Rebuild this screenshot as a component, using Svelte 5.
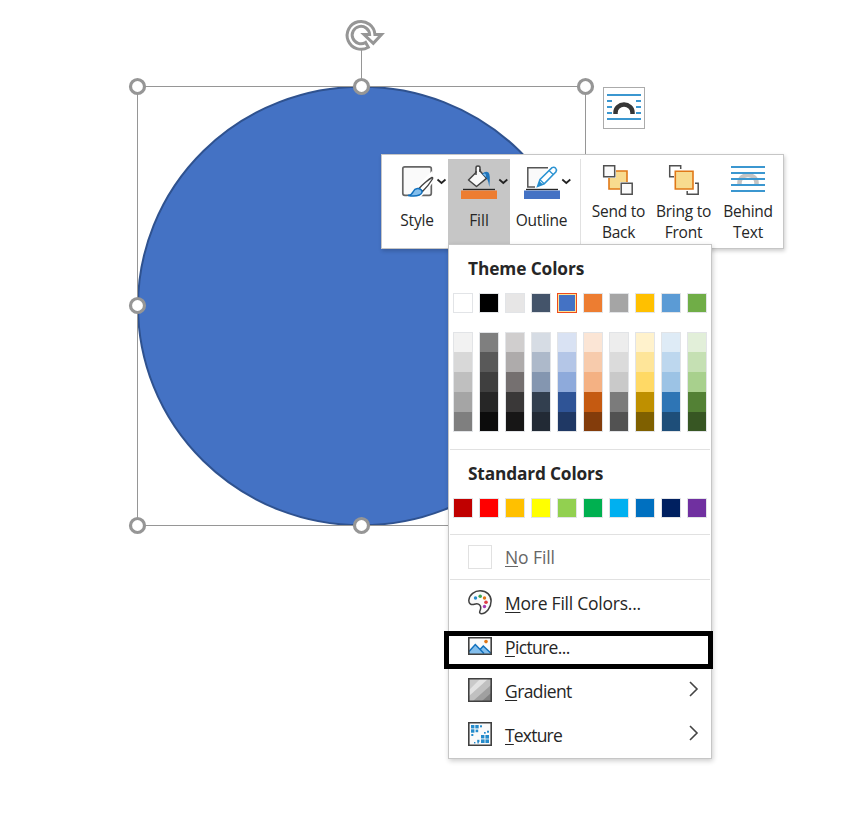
<script>
  const theme = [
    ['#ffffff', ['#f2f2f2', '#d8d8d8', '#bfbfbf', '#a5a5a5', '#7f7f7f']],
    ['#000000', ['#7f7f7f', '#595959', '#3f3f3f', '#262626', '#0c0c0c']],
    ['#e7e6e6', ['#d0cece', '#aeabab', '#757070', '#3a3838', '#171616']],
    ['#44546a', ['#d6dce4', '#adb9ca', '#8496b0', '#323f4f', '#222a35']],
    ['#4472c4', ['#d9e2f3', '#b4c6e7', '#8eaadb', '#2f5496', '#1f3864']],
    ['#ed7d31', ['#fbe5d5', '#f7cbac', '#f4b183', '#c55a11', '#833c0b']],
    ['#a5a5a5', ['#ededed', '#dbdbdb', '#c9c9c9', '#7b7b7b', '#525252']],
    ['#ffc000', ['#fff2cc', '#fee599', '#ffd965', '#bf9000', '#7f6000']],
    ['#5b9bd5', ['#deebf6', '#bdd7ee', '#9cc3e5', '#2e75b5', '#1e4e79']],
    ['#70ad47', ['#e2efd9', '#c5e0b3', '#a8d08d', '#538135', '#375623']]
  ];
  const standard = ['#c00000', '#ff0000', '#ffc000', '#ffff00', '#92d050', '#00b050', '#00b0f0', '#0070c0', '#002060', '#7030a0'];
  const handles = [[137.5, 86.5], [361.5, 86.5], [585.5, 86.5], [137.5, 305.5], [137.5, 525.5], [361.5, 525.5]];
  const dots = [
    [3, 3, 3.4], [7.3, 3, 3.4], [12, 3.3, 2], [3, 7.3, 3.4], [7.6, 7.6, 2.6], [3.3, 12, 2],
    [16, 10, 1.7], [13, 13, 3.4], [17.4, 13, 3.6], [9.2, 17.8, 2.2], [6, 20, 1.4], [13, 17.4, 3.6], [17.4, 17.4, 3.6], [9.4, 20, 1.4], [19, 8.7, 2]
  ];
</script>

<main>
  <svg class="shape" width="854" height="600" viewBox="0 0 854 600">
    <ellipse cx="361.5" cy="306" rx="223.5" ry="219.3" fill="#4472c4" stroke="#2f528f" stroke-width="2" />
    <path d="M137.5 86.5H585.5V525.5H137.5ZM361.5 48V80" fill="none" stroke="#969696" />
    {#each handles as [x, y]}
      <circle cx={x} cy={y} r="7" fill="#fff" stroke="#969696" stroke-width="3.2" />
    {/each}
    <path d="M368.3 47.2A13.9 13.9 0 1 1 374.9 34.5H381.5L373.3 43.3 364 34.5H369.6A8.7 8.7 0 1 0 365.6 42.4Z" fill="#fff" stroke="#969696" stroke-width="3" />
  </svg>

  <button class="layout" aria-label="Layout Options">
    <svg width="36" height="28" viewBox="0 0 36 28">
      <path d="M1 2H35M1 8H6M30 8H35M1 14H6M30 14H35M1 20H6M30 20H35M1 26H35" stroke="#3b97d0" stroke-width="2" />
      <path d="M9.5 21V19.5A8.5 8 0 0 1 26.5 19.5V21" fill="none" stroke="#363636" stroke-width="4.5" />
    </svg>
  </button>

  <div class="toolbar">
    <div class="tool style">
      <svg width="46" height="38" viewBox="0 0 46 38">
        <rect x="1.8" y="3.8" width="28.5" height="28.5" rx="2" fill="#fafafa" stroke="#666" stroke-width="1.7" />
        <path d="M6 34L31 8L34 17L30 22L20 34Z" fill="#fff" />
        <path d="M31 14.5C28 16 21 22 18 25.5L21.5 28.5C25 25 30 18.5 31.5 16Q32 14.4 31 14.5Z" fill="#fff" stroke="#444" stroke-width="1.4" />
        <path d="M7 32.5Q11 31.7 12.3 28.5C14 25 18.5 24.5 20.7 27.4C22.5 31 17 34.5 7 32.5Z" fill="#83beec" stroke="#1170bd" stroke-width="1.5" />
        <path class="chev" d="M36.5 16.5L40.5 20L44.5 16.5" />
      </svg>
      <span>Style</span>
    </div>
    <div class="tool fill">
      <svg width="50" height="38" viewBox="0 0 50 38">
        <path d="M7.5 17L15 9.5V4.7Q15 3 17 3T19 4.7V8L25.5 15.3L15.5 23.5Z" fill="#fafafa" stroke="#444" stroke-width="1.5" stroke-linejoin="round" />
        <path d="M15 8V12M19 6V9" stroke="#444" stroke-width="1.4" />
        <path d="M21 11Q24.5 7.5 27.5 9.5Q29.7 11.5 28.3 24Q27.5 18 25.7 15Z" fill="#1f75bc" />
        <path d="M22 11.2Q24.2 9.5 25 12.2L25 14Z" fill="#83beec" />
        <path d="M2 26.5H34" stroke="#262626" stroke-width="1.4" />
        <path d="M0 27.5H36V36H0Z" fill="#ed7d31" />
        <path class="chev" d="M38.3 16.5L42.3 20L46.3 16.5" />
      </svg>
      <span>Fill</span>
    </div>
    <div class="tool outline">
      <svg width="50" height="38" viewBox="0 0 50 38">
        <path d="M24 4.7H3.8V24H11" fill="#fafafa" stroke="#555" stroke-width="1.5" />
        <path d="M13.5 23.5L16 16.5L28 4.7Q30 3.6 31.5 5T32 8.7L20.2 20.8Z" fill="#fff" stroke="#2b93d2" stroke-width="1.5" />
        <path d="M25 7.5L29.2 11.5M16 16.7L20.2 20.8" stroke="#2b93d2" stroke-width="1.2" />
        <path d="M13.5 23.5L15.3 18L19 21.5Z" fill="#258bcb" />
        <path d="M2 26.5H34" stroke="#262626" stroke-width="1.4" />
        <path d="M0 27.5H36V36H0Z" fill="#4472c4" />
        <path class="chev" d="M38.3 16.5L42.3 20L46.3 16.5" />
      </svg>
      <span>Outline</span>
    </div>
    <div class="tool order send">
      <svg width="32" height="32" viewBox="0 0 32 32">
        <path d="M7 7H25V25H7Z" fill="#f8db8f" stroke="#e07817" stroke-width="1.6" />
        <path d="M0 0H14V14H0ZM18 18H32V32H18Z" fill="#fff" />
        <path d="M1.7 1.7H12.7V12.7H1.7ZM19.2 19.2H30.2V30.2H19.2Z" fill="#fafafa" stroke="#505050" stroke-width="1.5" />
      </svg>
      <span>Send to<br />Back</span>
    </div>
    <div class="tool order bring">
      <svg width="32" height="32" viewBox="0 0 32 32">
        <path d="M12.7 5V1.7H1.7V12.7H6M27 19.2H30.2V30.2H19.2V27" fill="none" stroke="#505050" stroke-width="1.5" />
        <path d="M7.3 7.3H25V25H7.3Z" fill="#f8db8f" stroke="#e07817" stroke-width="1.6" />
      </svg>
      <span>Bring to<br />Front</span>
    </div>
    <div class="tool order behind">
      <svg width="36" height="32" viewBox="0 0 36 32">
        <path d="M9.5 21V18.5A8.5 7.5 0 0 1 26.5 18.5V21" fill="none" stroke="#c4c4c4" stroke-width="4.5" />
        <path d="M1 3H35M1 9H35M1 15H35M1 21H35M1 27H35" stroke="#3b97d0" stroke-width="2" />
      </svg>
      <span>Behind<br />Text</span>
    </div>
  </div>

  <div class="menu">
    <h2>Theme Colors</h2>
    <div class="swatches">
      {#each theme as [base], i}
        <i class="swatch" class:selected={i === 4} style:background={base}></i>
      {/each}
    </div>
    <div class="swatches shades">
      {#each theme as [, shades]}
        <div class="column">
          {#each shades as shade}<i style:background={shade}></i>{/each}
        </div>
      {/each}
    </div>
    <hr />
    <h2 class="std">Standard Colors</h2>
    <div class="swatches">
      {#each standard as color}<i class="swatch" style:background={color}></i>{/each}
    </div>
    <hr class="second" />
    <div class="item none"><i class="empty"></i><span><u>N</u>o Fill</span></div>
    <hr />
    <div class="item">
      <svg width="24" height="26" viewBox="0 0 24 26">
        <path d="M.9 10.8C1.5 5.5 6.5 1.8 12.2 1.8C18.5 1.8 23.1 6 23.1 12C23.1 18.5 18.5 24.7 13.2 24.7C11.7 24.7 11.3 23.4 12 21.8C13 19.6 13 17.5 11.7 16C10.3 14.3 8.3 14.4 6.3 15.2C3.2 16.4.3 14.5.9 10.8Z" fill="#fafafa" stroke="#404040" stroke-width="1.5" />
        <circle cx="7.5" cy="9" r="1.7" fill="#258bcb" /><circle cx="12.2" cy="7.3" r="1.8" fill="#3ca653" /><circle cx="16.5" cy="9" r="1.7" fill="#e27616" /><circle cx="18" cy="13.2" r="1.8" fill="#df3b45" /><circle cx="16.5" cy="17.5" r="1.7" fill="#a33bb0" />
      </svg>
      <span class="more"><u>M</u>ore Fill Colors...</span>
    </div>
    <div class="item">
      <svg width="24" height="26" viewBox="0 0 24 26">
        <path d="M.8 4.8H23.2V21.2H.8Z" fill="#fafafa" />
        <path d="M1 18.5L7.3 11.5L12 16L15.3 13L23 20.3V21H1Z" fill="#83beec" />
        <path d="M1 18.5L7.3 11.5L16 20.5M12.5 16L15.3 13L23 20.3" fill="none" stroke="#1170bd" stroke-width="1.5" />
        <path d="M.8 4.8H23.2V21.2H.8Z" fill="none" stroke="#404040" stroke-width="1.6" />
        <circle cx="18" cy="8.6" r="1.8" fill="#e27616" />
      </svg>
      <span class="pic"><u>P</u>icture...</span>
    </div>
    <div class="item">
      <svg width="24" height="26" viewBox="0 0 24 26">
        <path d="M1 2H23V24H1Z" fill="#c0c0c0" />
        <path d="M1 2H12L1 13Z" fill="#c9c9c9" /><path d="M12 2H20L1 19V13Z" fill="#e2e2e2" /><path d="M23 8V17L15 24H5Z" fill="#a0a0a0" /><path d="M23 16V24H14Z" fill="#818181" />
        <path d="M.8 1.8H23.2V24.2H.8Z" fill="none" stroke="#404040" stroke-width="1.6" />
      </svg>
      <span class="grad"><u>G</u>radient</span>
      <svg class="arrow" width="10" height="16" viewBox="0 0 10 16"><path d="M1 1L8 8L1 15" /></svg>
    </div>
    <div class="item">
      <svg width="24" height="26" viewBox="0 0 24 26">
        <path d="M.8 1.8H23.2V24.2H.8Z" fill="#fafafa" stroke="#404040" stroke-width="1.6" />
        {#each dots as [x, y, s]}<rect {x} y={y + 1} width={s} height={s} fill="#258bcb" />{/each}
      </svg>
      <span class="tex"><u>T</u>exture</span>
      <svg class="arrow" width="10" height="16" viewBox="0 0 10 16"><path d="M1 1L8 8L1 15" /></svg>
    </div>
  </div>
  <div class="highlight"></div>
</main>

<style>
  :global(body) { margin: 0; background: #fff; }
  main { position: relative; width: 854px; height: 829px; overflow: hidden; background: #fff; font-family: "Open Sans", "Noto Sans", sans-serif; color: #262626; }
  * { box-sizing: border-box; }
  svg { display: block; flex: none; }
  .shape { position: absolute; left: 0; top: 0; }
  .layout { position: absolute; left: 603px; top: 87px; width: 42px; height: 42px; padding: 0 0 2px; display: flex; align-items: center; justify-content: center; border: 1px solid #ababab; background: #fff; }
  .toolbar { position: absolute; left: 381px; top: 154px; width: 403px; height: 95px; display: flex; padding: 4px 3px 0 4px; background: #fff; border: 1px solid #c6c6c6; box-shadow: 1px 2px 4px #0003; }
  .tool { display: flex; flex-direction: column; height: 90px; font-size: 15.5px; line-height: 21px; text-align: center; }
  .tool svg { margin-top: 4px; }
  .tool span { margin-top: 9px; white-space: nowrap; }
  .style { width: 62px; padding-left: 15px; }
  .style span { margin-left: -15px; letter-spacing: -.15px; }
  .fill { width: 62px; padding-left: 13px; background: #c6c6c6; }
  .fill span { margin-left: -13px; }
  .outline { width: 71px; padding-left: 14px; border-right: 1px solid #e1e1e1; }
  .outline span { margin-left: -21px; letter-spacing: -.25px; }
  .order { align-items: center; }
  .order svg { margin-top: 5px; }
  .order span { margin-top: 5px; letter-spacing: -.25px; }
  .send { width: 70px; padding-left: 5px; }
  .send svg { margin-left: -2px; }
  .bring { width: 65px; }
  .behind { width: 64px; }
  .chev { fill: none; stroke: #222; stroke-width: 1.7; }
  .menu { position: absolute; left: 448px; top: 244px; width: 264px; height: 515px; background: #fff; border: 1px solid #c6c6c6; box-shadow: 1px 2px 5px #0003; }
  h2 { margin: 12px 0 0 19px; font-size: 17.3px; line-height: 24px; font-weight: 700; letter-spacing: -.1px; white-space: nowrap; }
  .std { letter-spacing: -.16px; }
  .swatches { display: flex; gap: 6px; margin: 12px 0 0 4px; }
  .swatch { width: 20px; height: 20px; border: 1px solid #e2e4e7; }
  .selected { border-color: #f04b1b; box-shadow: inset 0 0 0 1px #ffe294; }
  .shades { margin-top: 19px; }
  .column { width: 20px; height: 100px; border: 1px solid #e2e4e7; display: flex; flex-direction: column; }
  .column i { height: 20px; }
  .column i:first-child, .column i:last-child { height: 19px; }
  hr { margin: 17px 1px 0; border: 0; height: 1px; background: #e1e1e1; }
  .second { margin-top: 16px; }
  .item { display: flex; align-items: center; height: 44px; padding: 0 12px 0 19px; font-size: 17.5px; line-height: 24px; }
  .item span { margin-left: 13px; padding-top: 2px; white-space: nowrap; }
  .none { color: #666; }
  .item.none span { padding-top: 0; letter-spacing: -.1px; }
  .none + hr { margin-top: 0; }
  .item .more { letter-spacing: -.24px; }
  .item .pic { letter-spacing: -.65px; }
  .item .grad { letter-spacing: -.6px; }
  .item .tex { letter-spacing: -.8px; }
  .empty { width: 24px; height: 24px; border: 1px solid #e1e1e1; }
  u { text-decoration-thickness: 1px; text-underline-offset: 2px; }
  .arrow { margin-left: auto; margin-top: -2px; }
  .arrow path { fill: none; stroke: #444; stroke-width: 1.6; }
  .highlight { position: absolute; left: 444px; top: 631px; width: 269px; height: 38px; border: 5px solid #000; }
</style>
